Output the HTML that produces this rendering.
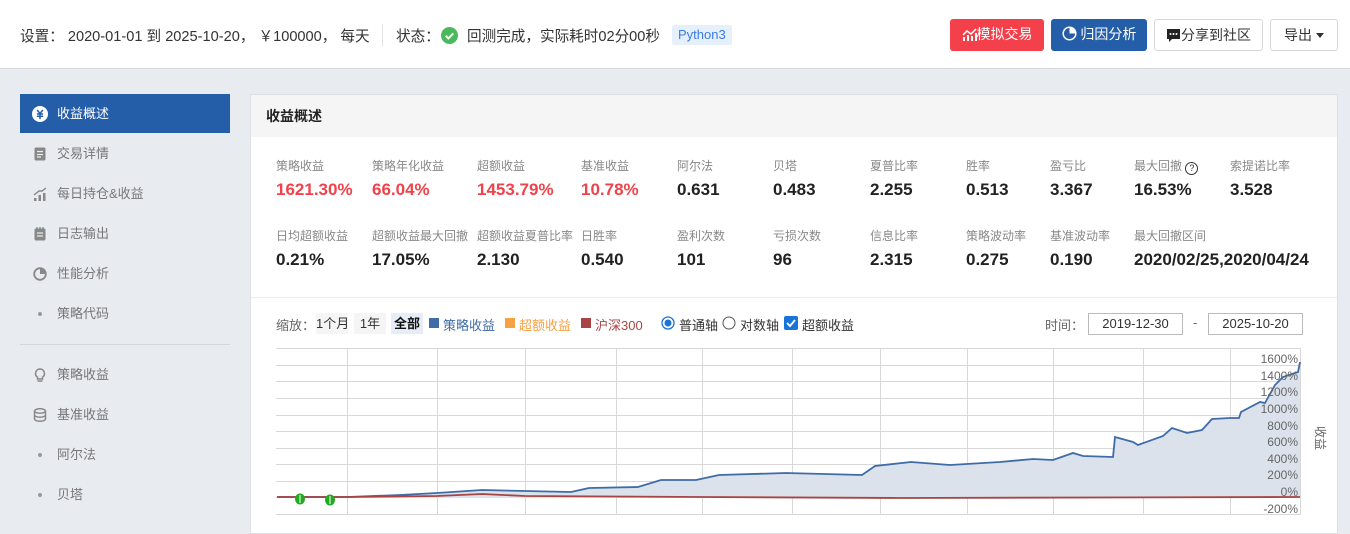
<!DOCTYPE html>
<html><head><meta charset="utf-8"><style>
*{margin:0;padding:0;box-sizing:border-box}
body{width:1350px;height:525px;overflow:hidden;background:#e8ebf0;font-family:"Liberation Sans","Noto Sans CJK SC",sans-serif;color:#333;position:relative}
.abs{position:absolute;white-space:nowrap}
#top{position:absolute;left:0;top:0;width:1350px;height:69px;background:#fff;border-bottom:1px solid #d6d9de}
.btn{position:absolute;top:19px;height:32px;border-radius:3px;font-size:14px;line-height:30px;text-align:center}
.side{position:absolute;left:20px;width:210px;height:40px;font-size:13px;color:#777;line-height:40px}
.side .ic{position:absolute;left:13px;top:13px;width:14px;height:14px}
.side span{position:absolute;left:37px}
.dot{position:absolute;left:18px;top:18px;width:4px;height:4px;border-radius:2px;background:#999}
.lab{position:absolute;font-size:12px;color:#888;white-space:nowrap}
.val{position:absolute;font-size:17px;font-weight:bold;color:#222;white-space:nowrap}
.red{color:#f0424a}
</style></head><body>
<div id="top">
<div class="abs" style="left:20px;top:25px;font-size:14.6px;color:#333">设置：&nbsp;2020-01-01 到 2025-10-20，&nbsp;￥100000，&nbsp;每天</div>
<div class="abs" style="left:382px;top:24px;width:1px;height:22px;background:#e3e3e3"></div>
<div class="abs" style="left:396px;top:25px;font-size:14.6px">状态：</div>
<svg class="abs" style="left:441px;top:27px" width="17" height="17"><circle cx="8.5" cy="8.5" r="8.5" fill="#4cb85c"/><path d="M4.8 8.8l2.6 2.6 4.8-5" stroke="#fff" stroke-width="2" fill="none"/></svg>
<div class="abs" style="left:467px;top:25px;font-size:14.6px">回测完成，实际耗时02分00秒</div>
<div class="abs" style="left:672px;top:25px;height:20px;padding:0 6px;background:#e6f0fc;color:#3a7be0;font-size:13px;line-height:20px;border-radius:2px">Python3</div>
<div class="btn" style="left:950px;width:94px;background:#f4404a;color:#fff">
<svg style="vertical-align:-2px" width="15" height="13"><path d="M1 13v-4h2v4zM5 13v-6h2v6zM9 13v-5h2v5zM13 13v-8h2v8z" fill="#fff"/><path d="M1 7l4-4 4 3 5-5" stroke="#fff" stroke-width="1.5" fill="none"/></svg>模拟交易</div>
<div class="btn" style="left:1051px;width:96px;background:#255ea8;color:#fff">
<svg style="vertical-align:-2px" width="15" height="15"><circle cx="7.5" cy="7.5" r="6.3" stroke="#fff" stroke-width="1.5" fill="none"/><path d="M7.5 1.2v6.3h6.3A6.3 6.3 0 0 0 7.5 1.2z" fill="#fff"/></svg> 归因分析</div>
<div class="btn" style="left:1154px;width:109px;background:#fff;border:1px solid #d5d7da;color:#333">
<svg style="vertical-align:-3px" width="15" height="15"><path d="M1 1h13v10H6l-3 3v-3H1z" fill="#222"/><circle cx="4.5" cy="6" r="1" fill="#fff"/><circle cx="7.5" cy="6" r="1" fill="#fff"/><circle cx="10.5" cy="6" r="1" fill="#fff"/></svg>分享到社区</div>
<div class="btn" style="left:1270px;width:68px;background:#fff;border:1px solid #d5d7da;color:#333">导出 <span style="display:inline-block;border:4px solid transparent;border-top:5px solid #333;vertical-align:-2px"></span></div>
</div>

<div class="side" style="top:94px;background:#255ea8;color:#fff;height:39px;line-height:39px"><svg class="ic" viewBox="0 0 14 14" style="top:12px;width:16px;height:16px;left:12px"><circle cx="7" cy="7" r="7" fill="#fff"/><path d="M4.5 3.5L7 6.5 9.5 3.5M4.3 7h5.4M4.3 9h5.4M7 6.5v5" stroke="#255ea8" stroke-width="1.3" fill="none"/></svg><span>收益概述</span></div>
<div class="side" style="top:134px"><svg class="ic" viewBox="0 0 14 14"><rect x="1.5" y="0.5" width="11" height="13" rx="1.5" fill="#888"/><path d="M4 4.5h6M4 7.5h6M4 10h4" stroke="#e8ebf0" stroke-width="1.2"/></svg><span>交易详情</span></div>
<div class="side" style="top:174px"><svg class="ic" viewBox="0 0 14 14"><path d="M1 14v-3h2.5v3zM5.5 14v-6H8v6zM10 14V6h2.5v8z" fill="#888"/><path d="M1 8l5-4 3 0 4-3" stroke="#888" stroke-width="1.4" fill="none"/></svg><span>每日持仓&amp;收益</span></div>
<div class="side" style="top:214px"><svg class="ic" viewBox="0 0 14 14"><rect x="1.5" y="1.5" width="11" height="12" rx="1.5" fill="#888"/><path d="M4 0v3M7 0v3M10 0v3" stroke="#888" stroke-width="1.4"/><path d="M4 6h6M4 9h6" stroke="#e8ebf0" stroke-width="1.2"/></svg><span>日志输出</span></div>
<div class="side" style="top:254px"><svg class="ic" viewBox="0 0 14 14"><circle cx="7" cy="7" r="5.8" stroke="#888" stroke-width="1.8" fill="none"/><path d="M7 1v6h6A6 6 0 0 0 7 1z" fill="#888"/></svg><span>性能分析</span></div>
<div class="side" style="top:294px"><div class="dot"></div><span>策略代码</span></div>
<div class="abs" style="left:20px;top:344px;width:210px;height:1px;background:#d3d6db"></div>
<div class="side" style="top:355px"><svg class="ic" viewBox="0 0 14 14"><path d="M7 1a4.5 4.5 0 0 0-2.5 8.2V11h5V9.2A4.5 4.5 0 0 0 7 1z" stroke="#888" stroke-width="1.5" fill="none"/><path d="M4.5 13h5" stroke="#888" stroke-width="1.5"/></svg><span>策略收益</span></div>
<div class="side" style="top:395px"><svg class="ic" viewBox="0 0 14 14"><ellipse cx="7" cy="3" rx="5.5" ry="2.2" stroke="#888" stroke-width="1.5" fill="none"/><path d="M1.5 3v8c0 1.2 2.5 2.2 5.5 2.2s5.5-1 5.5-2.2V3M1.5 7c0 1.2 2.5 2.2 5.5 2.2s5.5-1 5.5-2.2" stroke="#888" stroke-width="1.5" fill="none"/></svg><span>基准收益</span></div>
<div class="side" style="top:435px"><div class="dot"></div><span>阿尔法</span></div>
<div class="side" style="top:475px"><div class="dot"></div><span>贝塔</span></div>

<div class="abs" style="left:250px;top:94px;width:1088px;height:440px;background:#fff;border:1px solid #dcdfe3"></div>
<div class="abs" style="left:251px;top:95px;width:1086px;height:42px;background:#f5f5f5"></div>
<div class="abs" style="left:266px;top:106px;font-size:14px;font-weight:bold;color:#222">收益概述</div>
<div class="abs" style="left:251px;top:297px;width:1086px;height:1px;background:#ececec"></div>

<div class="lab" style="left:276px;top:157px">策略收益</div><div class="val red" style="left:276px;top:180px">1621.30%</div>
<div class="lab" style="left:372px;top:157px">策略年化收益</div><div class="val red" style="left:372px;top:180px">66.04%</div>
<div class="lab" style="left:477px;top:157px">超额收益</div><div class="val red" style="left:477px;top:180px">1453.79%</div>
<div class="lab" style="left:581px;top:157px">基准收益</div><div class="val red" style="left:581px;top:180px">10.78%</div>
<div class="lab" style="left:677px;top:157px">阿尔法</div><div class="val" style="left:677px;top:180px">0.631</div>
<div class="lab" style="left:773px;top:157px">贝塔</div><div class="val" style="left:773px;top:180px">0.483</div>
<div class="lab" style="left:870px;top:157px">夏普比率</div><div class="val" style="left:870px;top:180px">2.255</div>
<div class="lab" style="left:966px;top:157px">胜率</div><div class="val" style="left:966px;top:180px">0.513</div>
<div class="lab" style="left:1050px;top:157px">盈亏比</div><div class="val" style="left:1050px;top:180px">3.367</div>
<div class="lab" style="left:1134px;top:157px">最大回撤 <span style="display:inline-block;width:13px;height:13px;border:1.3px solid #333;border-radius:50%;font-size:9px;line-height:11px;text-align:center;color:#333;vertical-align:-1px">?</span></div><div class="val" style="left:1134px;top:180px">16.53%</div>
<div class="lab" style="left:1230px;top:157px">索提诺比率</div><div class="val" style="left:1230px;top:180px">3.528</div>

<div class="lab" style="left:276px;top:227px">日均超额收益</div><div class="val" style="left:276px;top:250px">0.21%</div>
<div class="lab" style="left:372px;top:227px">超额收益最大回撤</div><div class="val" style="left:372px;top:250px">17.05%</div>
<div class="lab" style="left:477px;top:227px">超额收益夏普比率</div><div class="val" style="left:477px;top:250px">2.130</div>
<div class="lab" style="left:581px;top:227px">日胜率</div><div class="val" style="left:581px;top:250px">0.540</div>
<div class="lab" style="left:677px;top:227px">盈利次数</div><div class="val" style="left:677px;top:250px">101</div>
<div class="lab" style="left:773px;top:227px">亏损次数</div><div class="val" style="left:773px;top:250px">96</div>
<div class="lab" style="left:870px;top:227px">信息比率</div><div class="val" style="left:870px;top:250px">2.315</div>
<div class="lab" style="left:966px;top:227px">策略波动率</div><div class="val" style="left:966px;top:250px">0.275</div>
<div class="lab" style="left:1050px;top:227px">基准波动率</div><div class="val" style="left:1050px;top:250px">0.190</div>
<div class="lab" style="left:1134px;top:227px">最大回撤区间</div><div class="val" style="left:1134px;top:250px">2020/02/25,2020/04/24</div>

<div class="abs" style="left:276px;top:315px;font-size:13px;color:#666">缩放：</div>
<div class="abs" style="left:316px;top:313px;width:32px;height:21px;background:#f5f5f5;font-size:13px;line-height:21px;text-align:center">1个月</div>
<div class="abs" style="left:354px;top:313px;width:32px;height:21px;background:#f5f5f5;font-size:13px;line-height:21px;text-align:center">1年</div>
<div class="abs" style="left:391px;top:313px;width:32px;height:21px;background:#e6edf7;font-size:13px;line-height:21px;text-align:center;font-weight:bold;color:#111">全部</div>
<div class="abs" style="left:429px;top:318px;width:10px;height:10px;background:#3f6ca6"></div><div class="abs" style="left:443px;top:315px;font-size:13px;color:#3f6ca6">策略收益</div>
<div class="abs" style="left:505px;top:318px;width:10px;height:10px;background:#f7a143"></div><div class="abs" style="left:519px;top:315px;font-size:13px;color:#f7a143">超额收益</div>
<div class="abs" style="left:581px;top:318px;width:10px;height:10px;background:#a84444"></div><div class="abs" style="left:595px;top:315px;font-size:13px;color:#a84444">沪深300</div>
<svg class="abs" style="left:661px;top:316px" width="14" height="14"><circle cx="7" cy="7" r="6" stroke="#1a73d9" stroke-width="1.3" fill="#fff"/><circle cx="7" cy="7" r="3.5" fill="#1a73d9"/></svg><div class="abs" style="left:679px;top:315px;font-size:13px">普通轴</div>
<svg class="abs" style="left:722px;top:316px" width="14" height="14"><circle cx="7" cy="7" r="6" stroke="#555" stroke-width="1" fill="#fff"/></svg><div class="abs" style="left:740px;top:315px;font-size:13px">对数轴</div>
<svg class="abs" style="left:784px;top:316px" width="14" height="14"><rect width="14" height="14" rx="2" fill="#1a73d9"/><path d="M3 7l3 3 5-6" stroke="#fff" stroke-width="1.8" fill="none"/></svg><div class="abs" style="left:802px;top:315px;font-size:13px">超额收益</div>

<div class="abs" style="left:1045px;top:315px;font-size:13px;color:#666">时间：</div>
<div class="abs" style="left:1088px;top:313px;width:95px;height:22px;border:1px solid #bbb;font-size:13px;line-height:20px;text-align:center">2019-12-30</div>
<div class="abs" style="left:1193px;top:315px;font-size:13px;color:#666">-</div>
<div class="abs" style="left:1208px;top:313px;width:95px;height:22px;border:1px solid #bbb;font-size:13px;line-height:20px;text-align:center">2025-10-20</div>

<svg class="abs" style="left:0;top:0" width="1350" height="525">
<g stroke="#d8d8d8" stroke-width="1">
<path d="M276 348.5H1301M276 365.5H1301M276 381.5H1301M276 398.5H1301M276 415.5H1301M276 431.5H1301M276 448.5H1301M276 464.5H1301M276 481.5H1301M276 497.5H1301M276 514.5H1301"/>
<path d="M347.5 348V515M437.5 348V515M525.5 348V515M616.5 348V515M702.5 348V515M792.5 348V515M880.5 348V515M967.5 348V515M1053.5 348V515M1143.5 348V515M1230.5 348V515M1300.5 348V515"/>
</g>
<path d="M277 497L347 497 400 495 437 493 482 490 525 491 571 492 589 488 638 487 661 480 696 480 719 475 786 473 862 475 875 466 911 462 950 465 1000 462 1033 459 1053 460 1073 453 1083 456 1113 457 1115 437 1133 442 1138 445 1163 436 1172 428 1187 433 1202 430 1212 419 1230 418 1239 418 1241 412 1260 402 1265 403 1275 385 1283 377 1298 372 1300 362L1300 498 277 498Z" fill="#dbe2ec"/>
<path d="M277 497L347 497 400 495 437 493 482 490 525 491 571 492 589 488 638 487 661 480 696 480 719 475 786 473 862 475 875 466 911 462 950 465 1000 462 1033 459 1053 460 1073 453 1083 456 1113 457 1115 437 1133 442 1138 445 1163 436 1172 428 1187 433 1202 430 1212 419 1230 418 1239 418 1241 412 1260 402 1265 403 1275 385 1283 377 1298 372 1300 362" stroke="#3f6ca6" stroke-width="1.8" fill="none"/>
<path d="M277 497L347 497 437 496 482 494 525 496 700 497 900 498 1300 497" stroke="#a84444" stroke-width="1.8" fill="none"/>
<ellipse cx="300" cy="499" rx="5" ry="5.5" fill="#1faa1f"/><path d="M300 495v8" stroke="#fff"/>
<ellipse cx="330" cy="500" rx="5" ry="5.5" fill="#1faa1f"/><path d="M330 496v8" stroke="#fff"/>
<g font-size="12" fill="#666" text-anchor="end" font-family="Liberation Sans,sans-serif">
<text x="1298" y="363">1600%</text><text x="1298" y="380">1400%</text><text x="1298" y="396">1200%</text><text x="1298" y="413">1000%</text><text x="1298" y="430">800%</text><text x="1298" y="446">600%</text><text x="1298" y="463">400%</text><text x="1298" y="479">200%</text><text x="1298" y="496">0%</text><text x="1298" y="513">-200%</text>
</g>
<text x="1310" y="432" font-size="12" fill="#666" transform="rotate(90 1316 432)" font-family="Noto Sans CJK SC,sans-serif">收益</text>
</svg>
</body></html>
